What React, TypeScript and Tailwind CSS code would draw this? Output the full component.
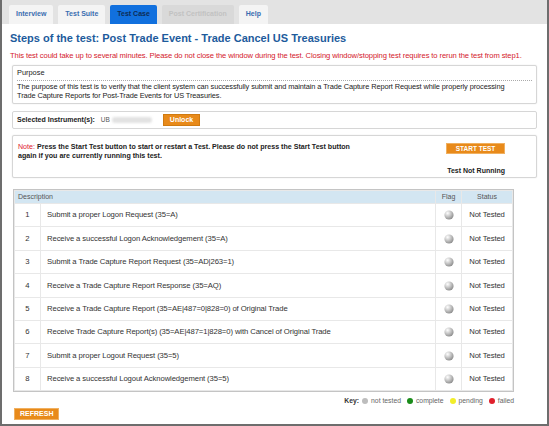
import React from 'react';

const steps = [
  'Submit a proper Logon Request (35=A)',
  'Receive a successful Logon Acknowledgement (35=A)',
  'Submit a Trade Capture Report Request (35=AD|263=1)',
  'Receive a Trade Capture Report Response (35=AQ)',
  'Receive a Trade Capture Report (35=AE|487=0|828=0) of Original Trade',
  'Receive Trade Capture Report(s) (35=AE|487=1|828=0) with Cancel of Original Trade',
  'Submit a proper Logout Request (35=5)',
  'Receive a successful Logout Acknowledgement (35=5)',
];

function Ball({ color }: { color: string }) {
  return (
    <svg width="10" height="10" viewBox="0 0 10 10" className="inline-block">
      <defs>
        <radialGradient id="ball-grad" cx="35%" cy="30%" r="75%">
          <stop offset="0%" stopColor="#ffffff" />
          <stop offset="100%" stopColor={color} />
        </radialGradient>
      </defs>
      <circle cx="5" cy="5" r="4.6" fill="url(#ball-grad)" />
    </svg>
  );
}

function Tab({ label, active, disabled }: { label: string; active?: boolean; disabled?: boolean }) {
  const cls = active
    ? 'bg-[#1170de] text-[#0d2c56]'
    : disabled
    ? 'bg-[#d9d9d9] text-[#c2c2c2]'
    : 'bg-[#f4f4f4] text-[#3a6db0]';
  return (
    <div className={`h-[19px] px-[7px] flex items-center text-[7px] font-bold rounded-t-[2px] ${cls}`}>
      {label}
    </div>
  );
}

export default function App() {
  return (
    <div
      className="w-[549px] h-[426px] overflow-hidden bg-white border-2 border-t-0 border-[#6d6d6d] text-[#222]"
      style={{ fontFamily: '"Liberation Sans", Arial, sans-serif' }}
    >
      {/* Tabs */}
      <div className="h-[24px] bg-[#e3e3e3] flex items-end gap-[5px] pl-[7px]">
        <Tab label="Interview" />
        <Tab label="Test Suite" />
        <Tab label="Test Case" active />
        <Tab label="Post Certification" disabled />
        <Tab label="Help" />
      </div>

      <div className="px-[8px]">
        <h1 className="mt-[7px] text-[11px] font-bold text-[#1d5b9c] leading-[14px] whitespace-nowrap">
          Steps of the test: Post Trade Event - Trade Cancel US Treasuries
        </h1>
        <p className="mt-[6px] text-[7.6px] text-[#d4202c] leading-[10px] whitespace-nowrap tracking-[-0.1px]">
          This test could take up to several minutes. Please do not close the window during the test. Closing window/stopping test requires to rerun the test from step1.
        </p>

        {/* Purpose */}
        <div className="mt-[4px] ml-[2px] w-[525px] border border-[#d6d6d6] rounded-[2px] px-[4px] pb-[3px] shadow-[0_0_1px_#ccc]">
          <div className="text-[7.4px] leading-[14px] border-b border-dotted border-[#aaa]">Purpose</div>
          <p className="text-[7.4px] leading-[9px] mt-[1px] tracking-[-0.1px]">
            The purpose of this test is to verify that the client system can successfully submit and maintain a Trade Capture Report Request while properly processing
            <br />
            Trade Capture Reports for Post-Trade Events for US Treasuries.
          </p>
        </div>

        {/* Instrument */}
        <div className="mt-[7px] ml-[2px] w-[525px] h-[18px] border border-[#d6d6d6] rounded-[2px] px-[4px] flex items-center gap-[6px]">
          <span className="text-[7px] font-bold">Selected Instrument(s):</span>
          <span className="text-[6.5px] text-[#555] flex items-center">
            UB
            <span className="ml-[2px] w-[40px] h-[6px] rounded-full bg-[#e2e2e2] blur-[1px]" />
          </span>
          <span className="ml-[5px] bg-[#e88a1a] text-white text-[7px] font-bold px-[6px] h-[12px] flex items-center border border-[#d07a10]">
            Unlock
          </span>
        </div>

        {/* Note */}
        <div className="mt-[6px] ml-[2px] w-[525px] h-[43px] border border-[#d6d6d6] rounded-[2px] px-[5px] pt-[7px] flex justify-between shadow-[0_0_1px_#ccc]">
          <p className="text-[7.1px] leading-[9px] font-bold w-[345px]">
            <span className="text-[#e0202c] font-normal">Note:</span> Press the Start Test button to start or restart a Test. Please do not press the Start Test button again if you are currently running this test.
          </p>
          <div className="flex flex-col items-end pr-[26px]">
            <span className="bg-[#e88a1a] text-white text-[6.5px] font-bold w-[59px] h-[11px] flex items-center justify-center border border-[#f0b060]">
              START TEST
            </span>
            <span className="mt-[12px] text-[7px] font-bold">Test Not Running</span>
          </div>
        </div>

        {/* Table */}
        <table className="mt-[11px] ml-[3px] w-[501px] border-separate border-spacing-[1px] border border-[#c4c4c4] bg-[#e8e8e8] text-[7.7px] text-[#333]">
          <thead>
            <tr className="h-[12px]">
              <th colSpan={2} className="bg-[#d3e6f2] font-normal text-left pl-[3px] text-[#555] text-[7px]">Description</th>
              <th className="bg-[#d3e6f2] font-normal text-[#555] w-[25px] text-[7px]">Flag</th>
              <th className="bg-[#d3e6f2] font-normal text-[#555] w-[50px] text-[7px]">Status</th>
            </tr>
          </thead>
          <tbody>
            {steps.map((s, i) => (
              <tr key={i} className="h-[22.4px]">
                <td className="bg-white text-center w-[25px]">{i + 1}</td>
                <td className="bg-white pl-[6px] tracking-[-0.1px]">{s}</td>
                <td className="bg-white text-center">
                  <Ball color="#8a8a8a" />
                </td>
                <td className="bg-white text-center tracking-[-0.1px]">Not Tested</td>
              </tr>
            ))}
          </tbody>
        </table>

        {/* Key */}
        <div className="w-[504px] h-[10px] flex justify-end items-center gap-[3px] text-[6.8px] text-[#666] mt-[4px]">
          <span className="font-bold text-[#333]">Key:</span>
          <span className="w-[6px] h-[6px] rounded-full bg-[#bdbdbd]" /> <span>not tested</span>
          <span className="ml-[3px] w-[6px] h-[6px] rounded-full bg-[#1a8c1a]" /> <span>complete</span>
          <span className="ml-[3px] w-[6px] h-[6px] rounded-full bg-[#f2ee2a]" /> <span>pending</span>
          <span className="ml-[3px] w-[6px] h-[6px] rounded-full bg-[#e0202c]" /> <span>failed</span>
        </div>

        <span className="mt-[2px] ml-[4px] flex w-fit bg-[#e88a1a] text-white text-[7px] font-bold px-[5px] h-[12px] items-center justify-center border border-[#f0b060]">
          REFRESH
        </span>
      </div>
    </div>
  );
}
